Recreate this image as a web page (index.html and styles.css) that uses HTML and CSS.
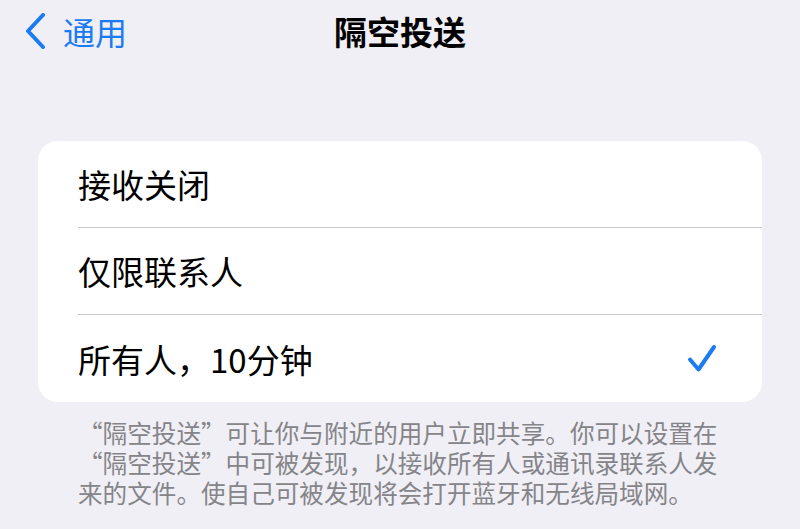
FILE: index.html
```html
<!DOCTYPE html>
<html lang="zh-CN">
<head>
<meta charset="UTF-8" />
<meta name="viewport" content="width=device-width, initial-scale=1" />
<title>隔空投送</title>
<link rel="stylesheet" href="styles.css">
</head>
<body>

<div class="navbar">
  <a class="back" href="#">
    <svg class="chevron" width="24" height="36" viewBox="0 0 24 36">
      <polyline points="19,2 4,18 19,34" fill="none" stroke="#1a7bf3" stroke-width="4" stroke-linecap="round" stroke-linejoin="round"/>
    </svg>
    <span>通用</span>
  </a>
  <h1>隔空投送</h1>
  <div></div>
</div>

<div class="lista">
  <div class="fila"><span class="texto">接收关闭</span></div>
  <div class="fila"><span class="texto">仅限联系人</span></div>
  <div class="fila seleccionada">
    <span class="texto">所有人，10分钟</span>
    <svg class="check" width="32" height="32" viewBox="0 0 32 32">
      <polyline points="4,16.5 12.5,26.5 28,4" fill="none" stroke="#1a7bf3" stroke-width="4" stroke-linecap="round" stroke-linejoin="round"/>
    </svg>
  </div>
</div>

<p class="nota">“隔空投送”可让你与附近的用户立即共享。你可以设置在“隔空投送”中可被发现，以接收所有人或通讯录联系人发来的文件。使自己可被发现将会打开蓝牙和无线局域网。</p>

</body>
</html>
```

FILE: styles.css
```css
body {
  margin: 0;
  background: #f0eff5;
  font-family: "Noto Sans CJK SC", "Noto Sans", sans-serif;
  color: #000;
}
.navbar {
  display: grid;
  grid-template-columns: 1fr auto 1fr;
  align-items: center;
  height: 62px;
}
.back {
  display: flex;
  align-items: center;
  gap: 15px;
  padding-left: 24px;
  color: #1a7bf3;
  text-decoration: none;
  font-size: 32px;
  line-height: 40px;
}
.chevron {
  display: block;
}
.navbar h1 {
  margin: 0;
  font-size: 33px;
  font-weight: 700;
  line-height: 40px;
}
.lista {
  margin: 79px 38px 0;
  background: #fff;
  border-radius: 20px;
  overflow: hidden;
}
.fila {
  display: flex;
  align-items: center;
  justify-content: space-between;
  height: 86px;
  margin-left: 40px;
  padding-right: 44px;
  border-bottom: 1px solid #c8c7cc;
  font-size: 33px;
}
.fila:last-child {
  border-bottom: none;
  height: 87px;
}
.check {
  display: block;
}
.nota {
  margin: 15px 0 0 78px;
  max-width: 652px;
  font-size: 24.6px;
  line-height: 30px;
  color: #858589;
}
```
